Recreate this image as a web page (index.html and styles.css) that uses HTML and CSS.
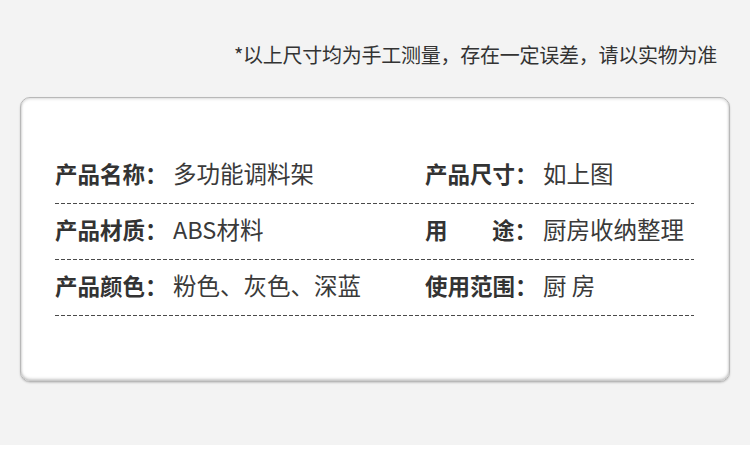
FILE: index.html
```html
<!DOCTYPE html>
<html lang="zh-CN">
<head>
<meta charset="utf-8">
<link rel="stylesheet" href="styles.css">
</head>
<body>
<div class="page">
  <p class="note">*以上尺寸均为手工测量，存在一定误差，请以实物为准</p>
  <div class="card">
    <div class="row">
      <div class="cell"><span class="label">产品名称：</span><span class="value">多功能调料架</span></div>
      <div class="cell"><span class="label">产品尺寸：</span><span class="value">如上图</span></div>
    </div>
    <div class="dash"></div>
    <div class="row">
      <div class="cell"><span class="label">产品材质：</span><span class="value">ABS材料</span></div>
      <div class="cell"><span class="label label-split"><span>用</span><span>途：</span></span><span class="value">厨房收纳整理</span></div>
    </div>
    <div class="dash"></div>
    <div class="row">
      <div class="cell"><span class="label">产品颜色：</span><span class="value">粉色、灰色、深蓝</span></div>
      <div class="cell"><span class="label">使用范围：</span><span class="value">厨 房</span></div>
    </div>
    <div class="dash"></div>
  </div>
</div>
</body>
</html>
```

FILE: styles.css
```css
* { box-sizing: border-box; }
html, body {
  margin: 0;
  padding: 0;
  background: #ffffff;
}
body {
  width: 750px;
  height: 475px;
  overflow: hidden;
  font-family: "Noto Sans CJK SC", "Noto Sans", sans-serif;
  color: #333;
}
.page {
  height: 445px;
  background: #f3f3f3;
  padding-top: 41px;
}
.note {
  margin: 0;
  padding-right: 33px;
  text-align: right;
  font-size: 20px;
  line-height: 28px;
  letter-spacing: -0.25px;
  color: #333;
}
.card {
  margin: 28px 20px 0 20px;
  height: 285px;
  background: #fff;
  border: 1px solid #b8b8b8;
  border-radius: 10px;
  box-shadow: inset 0 -2px 3px rgba(0,0,0,0.22), inset 0 1px 3px rgba(0,0,0,0.14), 0 1px 2px rgba(0,0,0,0.18);
  padding: 60px 35px 0 34px;
}
.row {
  display: grid;
  grid-template-columns: 370px 1fr;
  height: 30px;
  align-items: center;
}
.cell {
  display: flex;
  align-items: center;
  white-space: nowrap;
  line-height: 30px;
}
.label {
  width: 112px;
  margin-right: 6px;
  font-size: 22.5px;
  font-weight: 700;
  color: #333;
}
.label-split {
  display: flex;
  justify-content: space-between;
}
.value {
  font-size: 23.5px;
  font-weight: 400;
  color: #3a3a3a;
}
.dash {
  height: 1px;
  margin: 15px 0 10px 0;
  background: repeating-linear-gradient(to right, #4a4a4a 0 4px, transparent 4px 6px);
}
```
